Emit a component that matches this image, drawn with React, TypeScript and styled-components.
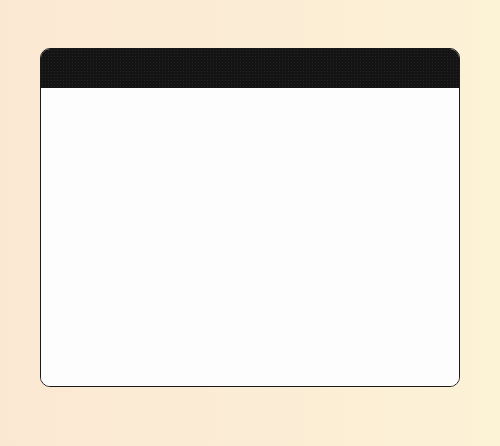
import styled, { createGlobalStyle } from 'styled-components'

const GlobalStyle = createGlobalStyle`
  html, body {
    margin: 0;
    padding: 0;
  }
  body {
    font-family: "Liberation Sans", Arial, sans-serif;
  }
`

const Page = styled.div`
  width: 500px;
  height: 446px;
  box-sizing: border-box;
  padding: 48px 40px 0 40px;
  background: linear-gradient(90deg, #fbe8d3 0%, #fbecd5 45%, #fcf2d6 100%);
`

const Window = styled.div`
  width: 420px;
  height: 339px;
  box-sizing: border-box;
  display: flex;
  flex-direction: column;
  border: 1px solid #1a1a1a;
  border-radius: 10px;
  overflow: hidden;
  background: #fdfdfd;
`

const TitleBar = styled.div`
  height: 39px;
  flex-shrink: 0;
  background-color: #141414;
  background-image: radial-gradient(circle, #242424 0.8px, transparent 1px);
  background-size: 3px 3px;
`

const Body = styled.div`
  flex: 1;
  background: #fdfdfd;
`

export default function App() {
  return (
    <>
      <GlobalStyle />
      <Page>
        <Window>
          <TitleBar />
          <Body />
        </Window>
      </Page>
    </>
  )
}
